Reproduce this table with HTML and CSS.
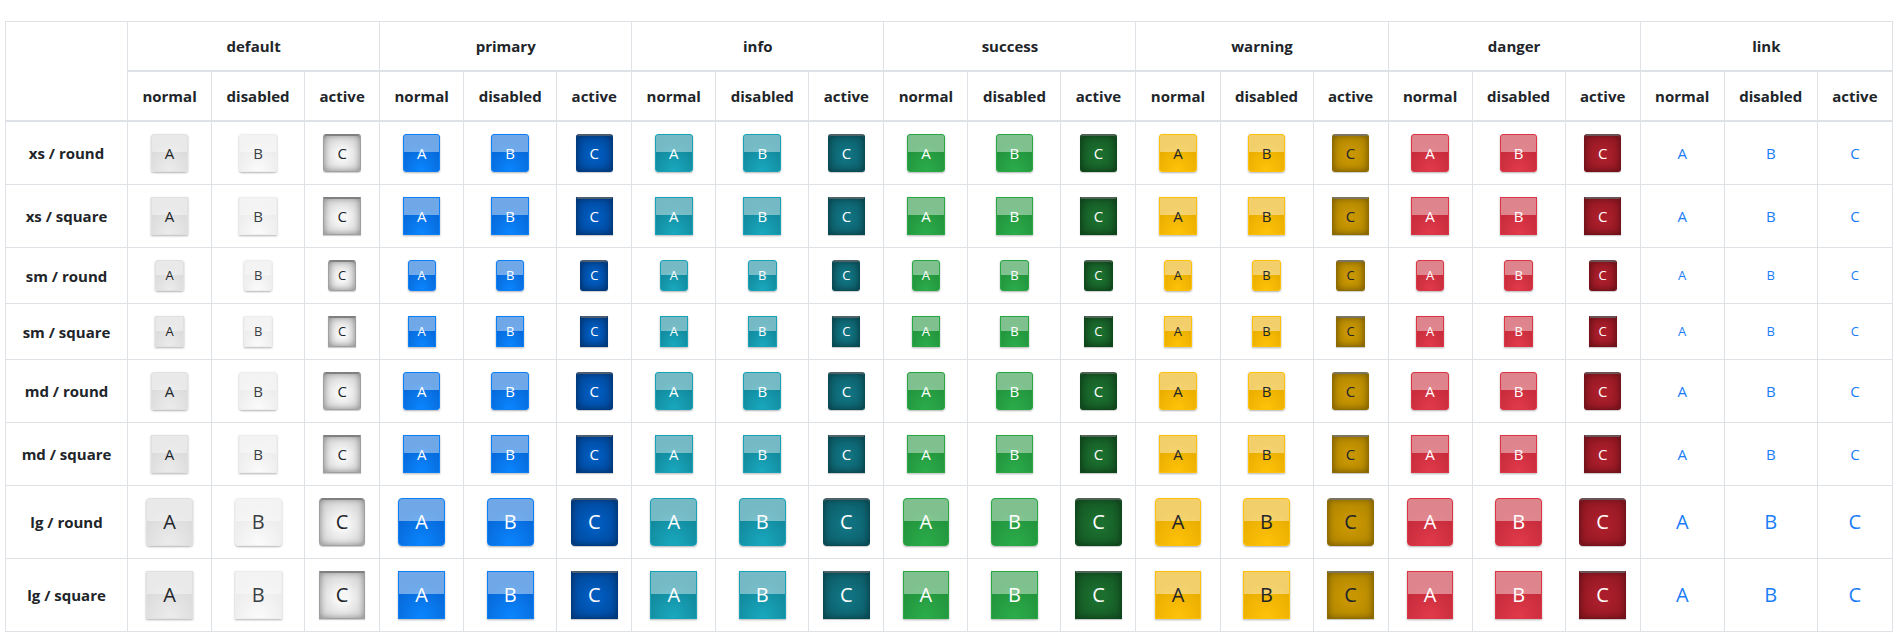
FILE: index.html
```html
<!DOCTYPE html>
<html lang="en">
<head>
<meta charset="utf-8">
<title>Button matrix</title>
<link rel="stylesheet" href="styles.css">
</head>
<body>
<div class="page">
<table class="matrix">
<colgroup>
<col class="c-label">
<col class="c-n"><col class="c-d"><col class="c-a">
<col class="c-n"><col class="c-d"><col class="c-a">
<col class="c-n"><col class="c-d"><col class="c-a">
<col class="c-n"><col class="c-d"><col class="c-a">
<col class="c-n"><col class="c-d"><col class="c-a">
<col class="c-n"><col class="c-d"><col class="c-a">
<col class="c-n"><col class="c-d"><col class="c-a">
</colgroup>
<thead>
<tr>
<th rowspan="2"></th>
<th colspan="3">default</th>
<th colspan="3">primary</th>
<th colspan="3">info</th>
<th colspan="3">success</th>
<th colspan="3">warning</th>
<th colspan="3">danger</th>
<th colspan="3">link</th>
</tr>
<tr>
<th>normal</th><th>disabled</th><th>active</th>
<th>normal</th><th>disabled</th><th>active</th>
<th>normal</th><th>disabled</th><th>active</th>
<th>normal</th><th>disabled</th><th>active</th>
<th>normal</th><th>disabled</th><th>active</th>
<th>normal</th><th>disabled</th><th>active</th>
<th>normal</th><th>disabled</th><th>active</th>
</tr>
</thead>
<tbody>
<tr>
<th>xs / round</th>
<td><button class="btn xs round default">A</button></td><td><button class="btn xs round default disabled">B</button></td><td><button class="btn xs round default active">C</button></td>
<td><button class="btn xs round primary">A</button></td><td><button class="btn xs round primary disabled">B</button></td><td><button class="btn xs round primary active">C</button></td>
<td><button class="btn xs round info">A</button></td><td><button class="btn xs round info disabled">B</button></td><td><button class="btn xs round info active">C</button></td>
<td><button class="btn xs round success">A</button></td><td><button class="btn xs round success disabled">B</button></td><td><button class="btn xs round success active">C</button></td>
<td><button class="btn xs round warning">A</button></td><td><button class="btn xs round warning disabled">B</button></td><td><button class="btn xs round warning active">C</button></td>
<td><button class="btn xs round danger">A</button></td><td><button class="btn xs round danger disabled">B</button></td><td><button class="btn xs round danger active">C</button></td>
<td><button class="btn xs round link">A</button></td><td><button class="btn xs round link disabled">B</button></td><td><button class="btn xs round link active">C</button></td>
</tr>
<tr>
<th>xs / square</th>
<td><button class="btn xs default">A</button></td><td><button class="btn xs default disabled">B</button></td><td><button class="btn xs default active">C</button></td>
<td><button class="btn xs primary">A</button></td><td><button class="btn xs primary disabled">B</button></td><td><button class="btn xs primary active">C</button></td>
<td><button class="btn xs info">A</button></td><td><button class="btn xs info disabled">B</button></td><td><button class="btn xs info active">C</button></td>
<td><button class="btn xs success">A</button></td><td><button class="btn xs success disabled">B</button></td><td><button class="btn xs success active">C</button></td>
<td><button class="btn xs warning">A</button></td><td><button class="btn xs warning disabled">B</button></td><td><button class="btn xs warning active">C</button></td>
<td><button class="btn xs danger">A</button></td><td><button class="btn xs danger disabled">B</button></td><td><button class="btn xs danger active">C</button></td>
<td><button class="btn xs link">A</button></td><td><button class="btn xs link disabled">B</button></td><td><button class="btn xs link active">C</button></td>
</tr>
<tr>
<th>sm / round</th>
<td><button class="btn sm round default">A</button></td><td><button class="btn sm round default disabled">B</button></td><td><button class="btn sm round default active">C</button></td>
<td><button class="btn sm round primary">A</button></td><td><button class="btn sm round primary disabled">B</button></td><td><button class="btn sm round primary active">C</button></td>
<td><button class="btn sm round info">A</button></td><td><button class="btn sm round info disabled">B</button></td><td><button class="btn sm round info active">C</button></td>
<td><button class="btn sm round success">A</button></td><td><button class="btn sm round success disabled">B</button></td><td><button class="btn sm round success active">C</button></td>
<td><button class="btn sm round warning">A</button></td><td><button class="btn sm round warning disabled">B</button></td><td><button class="btn sm round warning active">C</button></td>
<td><button class="btn sm round danger">A</button></td><td><button class="btn sm round danger disabled">B</button></td><td><button class="btn sm round danger active">C</button></td>
<td><button class="btn sm round link">A</button></td><td><button class="btn sm round link disabled">B</button></td><td><button class="btn sm round link active">C</button></td>
</tr>
<tr>
<th>sm / square</th>
<td><button class="btn sm default">A</button></td><td><button class="btn sm default disabled">B</button></td><td><button class="btn sm default active">C</button></td>
<td><button class="btn sm primary">A</button></td><td><button class="btn sm primary disabled">B</button></td><td><button class="btn sm primary active">C</button></td>
<td><button class="btn sm info">A</button></td><td><button class="btn sm info disabled">B</button></td><td><button class="btn sm info active">C</button></td>
<td><button class="btn sm success">A</button></td><td><button class="btn sm success disabled">B</button></td><td><button class="btn sm success active">C</button></td>
<td><button class="btn sm warning">A</button></td><td><button class="btn sm warning disabled">B</button></td><td><button class="btn sm warning active">C</button></td>
<td><button class="btn sm danger">A</button></td><td><button class="btn sm danger disabled">B</button></td><td><button class="btn sm danger active">C</button></td>
<td><button class="btn sm link">A</button></td><td><button class="btn sm link disabled">B</button></td><td><button class="btn sm link active">C</button></td>
</tr>
<tr>
<th>md / round</th>
<td><button class="btn md round default">A</button></td><td><button class="btn md round default disabled">B</button></td><td><button class="btn md round default active">C</button></td>
<td><button class="btn md round primary">A</button></td><td><button class="btn md round primary disabled">B</button></td><td><button class="btn md round primary active">C</button></td>
<td><button class="btn md round info">A</button></td><td><button class="btn md round info disabled">B</button></td><td><button class="btn md round info active">C</button></td>
<td><button class="btn md round success">A</button></td><td><button class="btn md round success disabled">B</button></td><td><button class="btn md round success active">C</button></td>
<td><button class="btn md round warning">A</button></td><td><button class="btn md round warning disabled">B</button></td><td><button class="btn md round warning active">C</button></td>
<td><button class="btn md round danger">A</button></td><td><button class="btn md round danger disabled">B</button></td><td><button class="btn md round danger active">C</button></td>
<td><button class="btn md round link">A</button></td><td><button class="btn md round link disabled">B</button></td><td><button class="btn md round link active">C</button></td>
</tr>
<tr>
<th>md / square</th>
<td><button class="btn md default">A</button></td><td><button class="btn md default disabled">B</button></td><td><button class="btn md default active">C</button></td>
<td><button class="btn md primary">A</button></td><td><button class="btn md primary disabled">B</button></td><td><button class="btn md primary active">C</button></td>
<td><button class="btn md info">A</button></td><td><button class="btn md info disabled">B</button></td><td><button class="btn md info active">C</button></td>
<td><button class="btn md success">A</button></td><td><button class="btn md success disabled">B</button></td><td><button class="btn md success active">C</button></td>
<td><button class="btn md warning">A</button></td><td><button class="btn md warning disabled">B</button></td><td><button class="btn md warning active">C</button></td>
<td><button class="btn md danger">A</button></td><td><button class="btn md danger disabled">B</button></td><td><button class="btn md danger active">C</button></td>
<td><button class="btn md link">A</button></td><td><button class="btn md link disabled">B</button></td><td><button class="btn md link active">C</button></td>
</tr>
<tr>
<th>lg / round</th>
<td><button class="btn lg round default">A</button></td><td><button class="btn lg round default disabled">B</button></td><td><button class="btn lg round default active">C</button></td>
<td><button class="btn lg round primary">A</button></td><td><button class="btn lg round primary disabled">B</button></td><td><button class="btn lg round primary active">C</button></td>
<td><button class="btn lg round info">A</button></td><td><button class="btn lg round info disabled">B</button></td><td><button class="btn lg round info active">C</button></td>
<td><button class="btn lg round success">A</button></td><td><button class="btn lg round success disabled">B</button></td><td><button class="btn lg round success active">C</button></td>
<td><button class="btn lg round warning">A</button></td><td><button class="btn lg round warning disabled">B</button></td><td><button class="btn lg round warning active">C</button></td>
<td><button class="btn lg round danger">A</button></td><td><button class="btn lg round danger disabled">B</button></td><td><button class="btn lg round danger active">C</button></td>
<td><button class="btn lg round link">A</button></td><td><button class="btn lg round link disabled">B</button></td><td><button class="btn lg round link active">C</button></td>
</tr>
<tr>
<th>lg / square</th>
<td><button class="btn lg default">A</button></td><td><button class="btn lg default disabled">B</button></td><td><button class="btn lg default active">C</button></td>
<td><button class="btn lg primary">A</button></td><td><button class="btn lg primary disabled">B</button></td><td><button class="btn lg primary active">C</button></td>
<td><button class="btn lg info">A</button></td><td><button class="btn lg info disabled">B</button></td><td><button class="btn lg info active">C</button></td>
<td><button class="btn lg success">A</button></td><td><button class="btn lg success disabled">B</button></td><td><button class="btn lg success active">C</button></td>
<td><button class="btn lg warning">A</button></td><td><button class="btn lg warning disabled">B</button></td><td><button class="btn lg warning active">C</button></td>
<td><button class="btn lg danger">A</button></td><td><button class="btn lg danger disabled">B</button></td><td><button class="btn lg danger active">C</button></td>
<td><button class="btn lg link">A</button></td><td><button class="btn lg link disabled">B</button></td><td><button class="btn lg link active">C</button></td>
</tr>
</tbody>
</table>
</div>
</body>
</html>
```

FILE: styles.css
```css
html, body {
  margin: 0;
  padding: 0;
  background: #fff;
}
body {
  font-family: "Open Sans", "Noto Sans", "Liberation Sans", sans-serif;
  color: #212529;
}
.page {
  padding: 21px 8px 0 5px;
}
.matrix {
  border-collapse: collapse;
  table-layout: fixed;
  width: 1888px;
  border: 1px solid #dee2e6;
}
.c-label { width: 122px; }
.c-n { width: 84px; }
.c-d { width: 93px; }
.c-a { width: 75px; }

.matrix th,
.matrix td {
  border: 1px solid #dee2e6;
  padding: 12px 0;
  text-align: center;
  vertical-align: middle;
}
.matrix th {
  font-size: 15px;
  font-weight: 700;
  line-height: 24px;
  color: #212529;
}
.matrix thead th {
  border-bottom-width: 2px;
}

/* buttons */
.btn {
  display: block;
  margin: 0 auto;
  width: max-content;
  font-family: "Open Sans", "Noto Sans", "Liberation Sans", sans-serif;
  font-weight: 400;
  color: #fff;
  border: 1px solid transparent;
  border-radius: 0;
  box-shadow: 0 1px 2px rgba(0, 0, 0, 0.3);
  cursor: pointer;
}
.xs, .md {
  font-size: 15px;
  line-height: 20px;
  padding: 8px 13px;
}
.sm {
  font-size: 13px;
  line-height: 17px;
  padding: 6px 9px;
}
.lg {
  font-size: 20px;
  line-height: 28px;
  padding: 9px 16px;
}
.round.xs, .round.md, .round.sm { border-radius: 3px; }
.round.lg { border-radius: 4px; }

.active {
  box-shadow: inset 0 1px 0 var(--top, #8a8a8a), inset 0 0 6px rgba(0, 0, 0, 0.35), 0 1px 1px rgba(0, 0, 0, 0.2);
}

/* default */
.default {
  color: #212529;
  border-color: #e0e0e0;
  background:
    linear-gradient(to bottom, rgba(255, 255, 255, 0.4) 0, rgba(255, 255, 255, 0.4) 48%, rgba(255, 255, 255, 0) 48%),
    radial-gradient(ellipse 70% 80% at 50% 100%, #ececec, #dadada);
}
.default.disabled {
  color: #3a3f44;
  border-color: #eeeeee;
  background:
    linear-gradient(to bottom, rgba(255, 255, 255, 0.4) 0, rgba(255, 255, 255, 0.4) 48%, rgba(255, 255, 255, 0) 48%),
    radial-gradient(ellipse 70% 80% at 50% 100%, #fbfbfb, #ebebeb);
}
.default.active {
  color: #212529;
  border-color: #a0a0a0;
  border-top-color: #808080;
  --top: #808080;
  background: radial-gradient(ellipse 75% 75% at 50% 55%, #f6f6f6 20%, #c4c4c4);
}

/* primary */
.primary {
  border-color: #0d7ff7;
  background:
    linear-gradient(to bottom, rgba(255, 255, 255, 0.42) 0, rgba(255, 255, 255, 0.42) 48%, rgba(255, 255, 255, 0) 48%),
    radial-gradient(ellipse 70% 80% at 50% 100%, #0a86ff, #0767d6);
}
.primary.active {
  border-color: #003b80;
  border-top-color: #4d5d70;
  --top: #4d5d70;
  background: radial-gradient(ellipse 75% 75% at 50% 55%, #005bbd 20%, #00418f);
}

/* info */
.info {
  border-color: #17a2b8;
  background:
    linear-gradient(to bottom, rgba(255, 255, 255, 0.42) 0, rgba(255, 255, 255, 0.42) 48%, rgba(255, 255, 255, 0) 48%),
    radial-gradient(ellipse 70% 80% at 50% 100%, #19a9c0, #128799);
}
.info.active {
  border-color: #0a4c56;
  border-top-color: #4f6266;
  --top: #4f6266;
  background: radial-gradient(ellipse 75% 75% at 50% 55%, #107280 20%, #0b5560);
}

/* success */
.success {
  border-color: #28a745;
  background:
    linear-gradient(to bottom, rgba(255, 255, 255, 0.42) 0, rgba(255, 255, 255, 0.42) 48%, rgba(255, 255, 255, 0) 48%),
    radial-gradient(ellipse 70% 80% at 50% 100%, #2bad4a, #22923c);
}
.success.active {
  border-color: #0f4a1c;
  border-top-color: #4f6354;
  --top: #4f6354;
  background: radial-gradient(ellipse 75% 75% at 50% 55%, #1b6e2e 20%, #124f21);
}

/* warning */
.warning {
  color: #212529;
  border-color: #ffc107;
  background:
    linear-gradient(to bottom, rgba(255, 255, 255, 0.42) 0, rgba(255, 255, 255, 0.42) 48%, rgba(255, 255, 255, 0) 48%),
    radial-gradient(ellipse 70% 80% at 50% 100%, #ffc309, #e8ac00);
}
.warning.active {
  color: #212529;
  border-color: #8f6c00;
  border-top-color: #7a7460;
  --top: #7a7460;
  background: radial-gradient(ellipse 75% 75% at 50% 55%, #c89600 20%, #a87f00);
}

/* danger */
.danger {
  border-color: #dc3545;
  background:
    linear-gradient(to bottom, rgba(255, 255, 255, 0.42) 0, rgba(255, 255, 255, 0.42) 48%, rgba(255, 255, 255, 0) 48%),
    radial-gradient(ellipse 70% 80% at 50% 100%, #e23a4b, #c42b3a);
}
.danger.active {
  border-color: #76121c;
  border-top-color: #6a5357;
  --top: #6a5357;
  background: radial-gradient(ellipse 75% 75% at 50% 55%, #aa1e2b 20%, #88151f);
}

/* link */
.link,
.link.active {
  color: #1a7df7;
  background: none;
  border-color: transparent;
  box-shadow: none;
}
```
